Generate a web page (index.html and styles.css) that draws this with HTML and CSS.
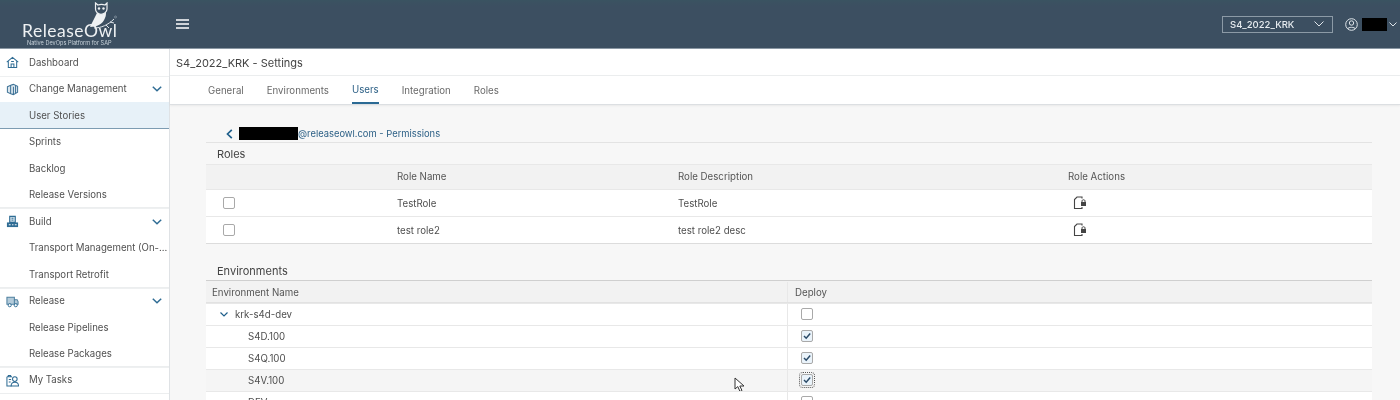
FILE: index.html
```html
<!DOCTYPE html>
<html lang="en">
<head>
<meta charset="utf-8">
<title>ReleaseOwl - Settings</title>
<link rel="stylesheet" href="styles.css">
</head>
<body>
<div class="app">
  <header class="topbar">
    <div class="logo">
      <svg class="owl" width="36" height="30" viewBox="0 0 36 30" aria-hidden="true">
        <path d="M12 11C10 15 8 19 5 25C12 25 18 22 20 16C21 14 21 12 21 9Z" fill="#eef1f3"/>
        <path d="M10.500 1L13 3C15 2.300 18 2.300 20 3L22 1V7C22 10 19 12.300 16 12.300C13 12.300 10.500 10 10.500 7Z" fill="#3c4f61" stroke="#eef1f3" stroke-width="1.200"/>
        <circle cx="14" cy="6.500" r="1.200" fill="#eef1f3"/><circle cx="18.500" cy="6.500" r="1.200" fill="#eef1f3"/>
        <path d="M9 26C16 26 23 23 29 17M21 23L24 26M25 20L29 21" stroke="#dfe5ea" stroke-width="1" fill="none"/>
        <circle cx="30.500" cy="15" r="1" fill="none" stroke="#aab6c0" stroke-width=".5"/>
      </svg>
      <span class="brand">ReleaseOwl</span>
      <span class="tagline">Native DevOps Platform for SAP</span>
    </div>
    <button class="menu-btn" aria-label="Menu">
      <svg width="13" height="10" viewBox="0 0 13 10"><path d="M0 1h13M0 5h13M0 9h13" stroke="#fff" stroke-width="1.600"/></svg>
    </button>
    <div class="top-right">
      <div class="project-select">
        <span>S4_2022_KRK</span>
        <svg width="10" height="6" viewBox="0 0 10 6"><path d="M.5.5L5 5 9.500.5" stroke="#dfe5ea" fill="none"/></svg>
      </div>
      <div class="user">
        <svg width="13" height="13" viewBox="0 0 13 13"><circle cx="6.500" cy="6.500" r="5.800" stroke="#dfe5ea" fill="none"/><circle cx="6.500" cy="5" r="2.200" stroke="#dfe5ea" fill="none"/><path d="M2.500 11C3.500 8.800 9.500 8.800 10.500 11" stroke="#dfe5ea" fill="none"/></svg>
        <span class="redact user-redact"></span>
        <svg width="8" height="5" viewBox="0 0 8 5"><path d="M.5.5L4 4 7.500.5" stroke="#dfe5ea" fill="none"/></svg>
      </div>
    </div>
  </header>
  <div class="body">
    <nav class="sidebar">
      <div class="nav-row nav-parent">
        <svg class="nav-icon" viewBox="0 0 14 14"><path d="M.8 6.500L7 1.500L13.200 6.500M2.500 5.500V12.500H11.500V5.500M5.500 12.500V8.500H8.500V12.500M5.500 6H8.500" fill="none" stroke="#2f6c94" stroke-width="1.100"/></svg>
        <span>Dashboard</span>
      </div>
      <div class="nav-row nav-parent">
        <svg class="nav-icon" viewBox="0 0 14 14"><path d="M1.500 4L5 2.500V11.500L1.500 10ZM5 2.500L8 1.500L12.500 3.500V10L8 12.500L5 11.500M8 4V12.500M10.300 3V11.300" fill="#dbe6ee" stroke="#3f7397" stroke-width="1.100"/></svg>
        <span>Change Management</span>
        <svg class="chev" viewBox="0 0 10 6"><path d="M.8.800L5 4.800 9.200.800" fill="none" stroke="#2f6c94" stroke-width="1.500"/></svg>
      </div>
      <div class="nav-row nav-child nav-active"><span>User Stories</span></div>
      <div class="nav-row nav-child"><span>Sprints</span></div>
      <div class="nav-row nav-child"><span>Backlog</span></div>
      <div class="nav-row nav-child nav-last"><span>Release Versions</span></div>
      <div class="nav-row nav-parent">
        <svg class="nav-icon" viewBox="0 0 14 14"><path d="M4 1.500H10V8H4Z" fill="#cfdfe9" stroke="#2f6c94" stroke-width="1.200"/><path d="M1 8H13V13H1Z" fill="#2f6c94"/><path d="M6 3.500H8M6 5.500H8" stroke="#2f6c94"/><path d="M3 10.500H5M6.500 10.500H8M9.500 10.500H11.500" stroke="#fff"/></svg>
        <span>Build</span>
        <svg class="chev" viewBox="0 0 10 6"><path d="M.8.800L5 4.800 9.200.800" fill="none" stroke="#2f6c94" stroke-width="1.500"/></svg>
      </div>
      <div class="nav-row nav-child"><span>Transport Management (On-...</span></div>
      <div class="nav-row nav-child nav-last"><span>Transport Retrofit</span></div>
      <div class="nav-row nav-parent">
        <svg class="nav-icon" viewBox="0 0 14 14"><path d="M1 2.500H9V10H1ZM9 5H12L13 7V10H9" fill="#b4cbda" stroke="#4d7f9f" stroke-width="1.100"/><circle cx="4" cy="11" r="1.700" fill="#fff" stroke="#2f6c94"/><circle cx="10.500" cy="11" r="1.700" fill="#fff" stroke="#2f6c94"/></svg>
        <span>Release</span>
        <svg class="chev" viewBox="0 0 10 6"><path d="M.8.800L5 4.800 9.200.800" fill="none" stroke="#2f6c94" stroke-width="1.500"/></svg>
      </div>
      <div class="nav-row nav-child"><span>Release Pipelines</span></div>
      <div class="nav-row nav-child nav-last"><span>Release Packages</span></div>
      <div class="nav-row nav-parent nav-last">
        <svg class="nav-icon" viewBox="0 0 14 14"><path d="M1 3H6.500M1 3V13H6M2.500 1.500H5V3H2.500ZM3 6H5.500M3 8.500H5" fill="none" stroke="#2f6c94" stroke-width="1.100"/><circle cx="9.500" cy="5.500" r="2.500" fill="none" stroke="#2f6c94" stroke-width="1.100"/><path d="M5.500 13C5.500 10 8 9 9.500 9C11 9 13.500 10 13.500 13Z" fill="none" stroke="#2f6c94" stroke-width="1.100"/></svg>
        <span>My Tasks</span>
      </div>
    </nav>
    <main class="main">
      <div class="page-title">S4_2022_KRK - Settings</div>
      <div class="tabs">
        <span class="tab">General</span>
        <span class="tab">Environments</span>
        <span class="tab tab-active">Users</span>
        <span class="tab">Integration</span>
        <span class="tab">Roles</span>
      </div>
      <div class="content">
        <div class="crumb">
          <svg width="7" height="10" viewBox="0 0 7 10"><path d="M5.800.8L1.500 5L5.800 9.200" fill="none" stroke="#1f5f8b" stroke-width="1.700"/></svg>
          <span class="redact crumb-redact"></span><span class="crumb-text">@releaseowl.com - Permissions</span>
        </div>
        <section class="panel">
          <h2 class="panel-title">Roles</h2>
          <div class="roles-row roles-head">
            <span></span><span>Role Name</span><span>Role Description</span><span>Role Actions</span>
          </div>
          <div class="roles-row">
            <span class="cb"></span><span>TestRole</span><span>TestRole</span>
            <svg class="action" viewBox="0 0 14 14"><path d="M9 2.500V1H4L1.500 3.500V12.500H9V11" fill="none" stroke="#444" stroke-width="1.100"/><rect x="8" y="6" width="5" height="4" fill="#444"/><path d="M9 6V4.800C9 3.400 12 3.400 12 4.800V6" fill="none" stroke="#444"/></svg>
          </div>
          <div class="roles-row">
            <span class="cb"></span><span>test role2</span><span>test role2 desc</span>
            <svg class="action" viewBox="0 0 14 14"><path d="M9 2.500V1H4L1.500 3.500V12.500H9V11" fill="none" stroke="#444" stroke-width="1.100"/><rect x="8" y="6" width="5" height="4" fill="#444"/><path d="M9 6V4.800C9 3.400 12 3.400 12 4.800V6" fill="none" stroke="#444"/></svg>
          </div>
        </section>
        <section class="panel env-panel">
          <h2 class="panel-title">Environments</h2>
          <div class="env-row env-head"><span class="env-name">Environment Name</span><span class="env-deploy">Deploy</span></div>
          <div class="env-row">
            <span class="env-name env-group">
              <svg width="8" height="5" viewBox="0 0 8 5"><path d="M.5.500L4 4 7.500.500" fill="none" stroke="#1f5f8b" stroke-width="1.200"/></svg>
              krk-s4d-dev
            </span>
            <span class="env-deploy"><span class="cb"></span></span>
          </div>
          <div class="env-row">
            <span class="env-name env-leaf">S4D.100</span>
            <span class="env-deploy"><span class="cb cb-on"><svg viewBox="0 0 10 10"><path d="M2 5L4.200 7.200L8.200 2.500" fill="none" stroke="#2a4a68" stroke-width="1.500"/></svg></span></span>
          </div>
          <div class="env-row">
            <span class="env-name env-leaf">S4Q.100</span>
            <span class="env-deploy"><span class="cb cb-on"><svg viewBox="0 0 10 10"><path d="M2 5L4.200 7.200L8.200 2.500" fill="none" stroke="#2a4a68" stroke-width="1.500"/></svg></span></span>
          </div>
          <div class="env-row env-hover">
            <span class="env-name env-leaf">S4V.100</span>
            <span class="env-deploy"><span class="cb cb-on cb-focus"><svg viewBox="0 0 10 10"><path d="M2 5L4.200 7.200L8.200 2.500" fill="none" stroke="#2a4a68" stroke-width="1.500"/></svg></span></span>
            <svg class="cursor" width="12" height="16" viewBox="0 0 12 16"><path d="M1 1V12L3.800 9.600L6 14.500L8 13.500L5.800 9H10Z" fill="#fff" stroke="#333"/></svg>
          </div>
          <div class="env-row">
            <span class="env-name env-leaf">DEV</span>
            <span class="env-deploy"><span class="cb"></span></span>
          </div>
        </section>
      </div>
    </main>
  </div>
</div>
</body>
</html>
```
FILE: styles.css
```css
* { box-sizing: border-box; }
html, body { margin: 0; padding: 0; height: 400px; overflow: hidden; }
body { font-family: "Inter", "Liberation Sans", sans-serif; font-size: 10px; color: #444; background: #fff; }
.app { height: 400px; display: flex; flex-direction: column; overflow: hidden; filter: blur(.35px); }

.topbar { height: 49px; flex: none; display: flex; align-items: center; background: linear-gradient(#3a5361, #3c4f61 6px); border-bottom: 1px solid #8a97a3; position: relative; }
.logo { width: 170px; height: 48px; flex: none; position: relative; }
.owl { position: absolute; left: 85px; top: 2px; }
.brand { position: absolute; left: 22px; top: 22px; font-size: 17.500px; line-height: 18px; color: #eef1f3; letter-spacing: .5px; font-weight: 400; font-family: "Lato", sans-serif; }
.tagline { position: absolute; left: 27px; top: 40px; font-size: 5.600px; line-height: 6px; color: #c8d2da; white-space: nowrap; }
.menu-btn { width: 13px; height: 10px; padding: 0; margin: 0 0 1px 6px; background: none; border: 0; display: flex; }
.top-right { margin-left: auto; display: flex; align-items: center; }
.project-select { width: 111px; height: 17px; border: 1px solid #8c9aa6; display: flex; align-items: center; justify-content: space-between; padding: 0 8px 0 7px; color: #e6ebef; font-size: 9.500px; font-weight: 500; margin-right: 12px; }
.user { width: 55px; display: flex; align-items: center; }
.redact { background: #000; display: block; }
.user-redact { width: 25px; height: 13px; margin: 0 2px 0 4px; }

.body { flex: 1; min-height: 0; display: flex; }
.sidebar { width: 170px; flex: none; border-right: 1px solid #dfe2e5; background: #fff; overflow: hidden; }
.nav-row { height: 26.500px; display: flex; align-items: center; padding-top: 1px; font-size: 9.650px; color: #505050; white-space: nowrap; }
.nav-row > span { line-height: 1; }
.nav-parent { padding-left: 6px; padding-top: 0; border-top: 1px solid #eef0f1; }
.nav-parent:first-child { border-top: 0; padding-top: 1px; }
.nav-child { padding-left: 29px; }
.nav-active { background: #e7f1f8; border-bottom: 1px solid #7d9cb2; padding-top: 2px; }
.nav-last { border-bottom: 1px solid #eceeef; }
.nav-child.nav-last { padding-top: 2px; }
.nav-icon { width: 13px; height: 13px; margin-right: 10px; flex: none; }
.chev { width: 10px; height: 6px; margin-left: auto; margin-right: 7px; }

.main { flex: 1; min-width: 0; display: flex; flex-direction: column; background: #f7f7f7; }
.page-title { height: 27px; flex: none; padding-left: 6px; padding-top: 1px; display: flex; align-items: center; background: #fff; border-bottom: 1px solid #eceeef; font-size: 11px; color: #444; }
.tabs { height: 29px; flex: none; display: flex; align-items: center; gap: 23px; padding-left: 38px; background: #fff; border-bottom: 1px solid #dcdfe2; box-shadow: 0 1px 2px rgba(0,0,0,.06); font-size: 9.700px; color: #6a6a6a; }
.tab { height: 100%; display: flex; align-items: center; padding-top: 1px; }
.tab-active { color: #2b5f85; border-bottom: 2px solid #2b6a94; }

.content { flex: 1; min-height: 0; padding: 20px 28px 0 36px; overflow: hidden; }
.crumb { height: 17px; display: flex; align-items: center; padding-left: 20px; }
.crumb-redact { width: 59px; height: 13px; margin-left: 6px; }
.crumb-text { font-size: 9.400px; color: #2b5f85; }

.panel { border-top: 1px solid #e3e3e3; }
.panel-title { margin: 0; height: 21px; padding-left: 11px; display: flex; align-items: center; font-size: 11px; font-weight: 400; color: #444; }
.roles-row { display: grid; grid-template-columns: 191px 281px 390px 1fr; align-items: center; height: 27px; background: #fff; border-top: 1px solid #e8e8e8; font-size: 9.700px; color: #4f4f4f; }
.roles-row:last-child { border-bottom: 1px solid #dcdcdc; height: 28px; }
.roles-row > .cb { margin-left: 17px; }
.roles-head { height: 25px; padding-bottom: 1px; background: #f2f2f2; color: #555; }
.action { width: 14px; height: 14px; margin-left: 5px; }
.cb { display: block; width: 12px; height: 12px; border: 1px solid #a9a9a9; border-radius: 2px; background: #fff; }
.cb svg { display: block; width: 10px; height: 10px; }
.cb-on { background: #eaf3fa; }
.cb-focus { outline: 1px dotted #555; outline-offset: 1px; }

.env-panel { margin-top: 18px; border-top: 0; }
.env-panel .panel-title { height: 18px; }
.env-row { display: grid; grid-template-columns: 582px 1fr; height: 22px; background: #fff; border-top: 1px solid #e8e8e8; align-items: stretch; font-size: 9.700px; color: #4f4f4f; position: relative; }
.env-head { height: 23px; padding-top: 1px; background: #f2f2f2; border-top: 1px solid #cfcfcf; border-bottom: 1px solid #e2e2e2; color: #555; }
.env-name { display: flex; align-items: center; padding-left: 6px; border-right: 1px solid #e8e8e8; }
.env-group { padding-left: 14px; gap: 7px; }
.env-leaf { padding-left: 42px; }
.env-deploy { display: flex; align-items: center; padding-left: 7px; }
.env-deploy .cb { margin-left: 6px; margin-bottom: 2px; }
.env-hover { background: #f5f5f5; }
.cursor { position: absolute; left: 528px; top: 7px; }
```
